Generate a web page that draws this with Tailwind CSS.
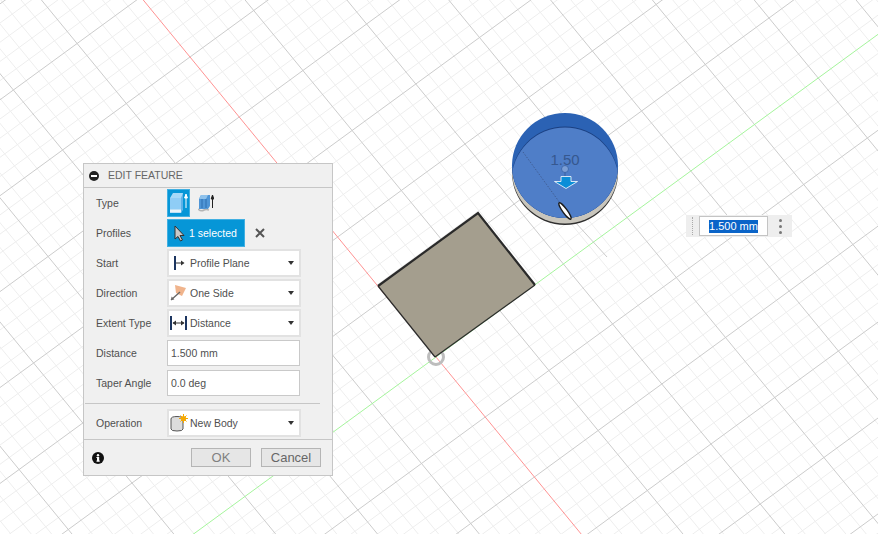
<!DOCTYPE html>
<html lang="en">
<head>
    <meta charset="UTF-8"/>
    <title>Edit Feature</title>
    <script src="https://cdn.jsdelivr.net/npm/@tailwindcss/browser@4"></script>
</head>
<body class="bg-white font-['Liberation_Sans',sans-serif]">
<div class="relative w-[878px] h-[534px] overflow-hidden bg-white">

    <!-- Viewport canvas -->
    <svg class="absolute inset-0" width="878" height="534" viewBox="0 0 878 534">
        <defs>
            <clipPath id="top-face"><ellipse cx="565" cy="165.5" rx="53" ry="52.5"/></clipPath>
        </defs>
        <g id="grid"></g>

        <!-- origin ring -->
        <circle cx="436" cy="357" r="7.5" fill="none" stroke="#bdbdbd" stroke-width="3"/>

        <!-- sketch rectangle -->
        <polygon points="378,286 478,213 535,285 435,357" fill="#a49e8e"/>
        <path d="M435 357 L378 286" stroke="#2b2b2b" stroke-width="1.2" fill="none"/>
        <path d="M435 357 L535 285" stroke="#2b2b2b" stroke-width="1.2" fill="none"/>
        <path d="M378 286 L478 213 L535 285" stroke="#2a2a2a" stroke-width="2.2" fill="none"/>

        <!-- cylinder -->
        <line x1="565" y1="211" x2="607" y2="257" stroke="#b5b5b5" stroke-width="0.7"/>
        <ellipse cx="565" cy="172.5" rx="53" ry="52.5" fill="#2e2e2e"/>
        <ellipse cx="565" cy="171" rx="53" ry="52.5" fill="#c8c5bc"/>
        <ellipse cx="565" cy="165.5" rx="53" ry="52.5" fill="#2b62b4"/>
        <g clip-path="url(#top-face)">
            <ellipse cx="565" cy="180" rx="53.5" ry="53.5" fill="#1a3f80"/>
            <ellipse cx="565" cy="181" rx="53.5" ry="53.5" fill="#4f7ec8"/>
        </g>
        <line x1="523" y1="152" x2="560" y2="203" stroke="#3c5588" stroke-width="0.8" stroke-dasharray="1.5 1.5"/>
        <text x="565" y="165" text-anchor="middle" font-size="15" fill="#36588f" font-family="Liberation Sans, sans-serif">1.50</text>
        <circle cx="565" cy="169" r="3.5" fill="#7c9ed4" stroke="#3f6aae" stroke-width="1"/>
        <line x1="565" y1="172" x2="565" y2="177" stroke="#3f6aae" stroke-width="1.5"/>
        <path d="M561 176.5 H571 V181.5 H577.5 L566 188.5 L554.5 181.5 H561 Z" fill="#0a8ed8" stroke="#fff" stroke-width="0.8"/>
        <ellipse cx="565" cy="211" rx="2.2" ry="10" transform="rotate(-36 565 211)" fill="#fff" stroke="#1c1c1c" stroke-width="1.4"/>
    </svg>

    <!-- Edit feature dialog -->
    <div class="absolute left-[83px] top-[163px] w-[250px] h-[313px] flex flex-col bg-[#f0f0f0] border border-[#c6c6c6] text-[10.5px] text-[#4f4f4f]">
        <div class="flex items-center h-[24px] shrink-0 border-b border-[#c6c6c6] pl-[5px] gap-[9px]">
            <svg width="10" height="10" viewBox="0 0 10 10"><circle cx="5" cy="5" r="5" fill="#222"/><rect x="2" y="4" width="6" height="2" fill="#fff"/></svg>
            <span class="text-[#666]">EDIT FEATURE</span>
        </div>

        <div class="flex flex-col gap-[2px] pt-px">
            <div class="flex items-center h-[28px]">
                <span class="w-[83px] pl-3 pt-[2px]">Type</span>
                <div class="flex items-center gap-[8px]">
                    <div class="flex items-center justify-center w-[23px] h-[28px] bg-[#0696d7] border border-[#41b0e2]">
                        <svg width="19" height="22" viewBox="0 0 19 22">
                            <path d="M1 6 L4 1 H14 V17 L12 21 H1 Z" fill="#a6d9f8"/>
                            <path d="M1 6 H12 V21 H1 Z" fill="#8fcdf6"/>
                            <path d="M12 6 L14 1 V17 L12 21 Z" fill="#5fb2e8"/>
                            <rect x="1" y="17.5" width="11" height="3" fill="#eaf3f8"/>
                            <path d="M17 16 V4 M15.6 6 L17 2 L18.4 6 Z" stroke="#fff" stroke-width="1" fill="#fff"/>
                        </svg>
                    </div>
                    <svg width="16" height="18" viewBox="0 0 16 18">
                        <path d="M1 5 L3 1 H12 V12 L10 15 H1 Z" fill="#4f95d6"/>
                        <path d="M3 1 H10 L8 5 H1 Z" fill="#8fc2ec"/>
                        <path d="M8 5 V14 M4 5 V14" stroke="#2f6fb0" stroke-width="1"/>
                        <path d="M0 15 Q3 18 6 16 Q8 15 11 16" stroke="#b4b4b4" stroke-width="1.6" fill="none"/>
                        <path d="M14.5 14 V3 M13.2 5 L14.5 1 L15.8 5 Z" stroke="#222" stroke-width="1" fill="#222"/>
                    </svg>
                </div>
            </div>

            <div class="flex items-center h-[28px]">
                <span class="w-[83px] pl-3 pt-[2px]">Profiles</span>
                <div class="flex items-center w-[78px] h-[28px] bg-[#0696d7] border border-[#41b0e2] text-white pl-[6px] gap-[4px]">
                    <svg width="11" height="17" viewBox="0 0 11 17"><path d="M1 1 V14 L4 11.5 L6.5 16 L8.5 15 L6 10.5 H10 Z" fill="#c9c9c9" stroke="#333" stroke-width="1"/></svg>
                    <span class="pt-[2px]">1 selected</span>
                </div>
                <svg class="ml-[10px]" width="10" height="10" viewBox="0 0 10 10"><path d="M1 1 L9 9 M9 1 L1 9" stroke="#555" stroke-width="2"/></svg>
            </div>

            <div class="flex items-center h-[28px]">
                <span class="w-[83px] pl-3 pt-[2px]">Start</span>
                <div class="flex items-center w-[134px] h-[28px] bg-white border-2 border-[#e2e2e2] pr-[5px]">
                    <svg class="w-[21px] shrink-0" width="21" height="16" viewBox="0 0 21 16"><path d="M6 1 V15" stroke="#1c3560" stroke-width="2"/><path d="M7 8 H13" stroke="#333" stroke-width="1"/><path d="M12 5.5 L15.5 8 L12 10.5 Z" fill="#333"/></svg>
                    <span class="flex-1 pt-[2px]">Profile Plane</span>
                    <span class="w-0 h-0 border-x-[3px] border-x-transparent border-t-[4px] border-t-[#333]"></span>
                </div>
            </div>

            <div class="flex items-center h-[28px]">
                <span class="w-[83px] pl-3 pt-[2px]">Direction</span>
                <div class="flex items-center w-[134px] h-[28px] bg-white border-2 border-[#e2e2e2] pr-[5px]">
                    <svg class="w-[21px] shrink-0" width="21" height="18" viewBox="0 0 21 18"><path d="M6 1 L17 4 L13 12 L7 9 Z" fill="#f0b48c"/><path d="M2 16 L11 8" stroke="#666" stroke-width="1.4"/><path d="M2 16 L2.6 12.6 L5.4 15.4 Z" fill="#666"/></svg>
                    <span class="flex-1 pt-[2px]">One Side</span>
                    <span class="w-0 h-0 border-x-[3px] border-x-transparent border-t-[4px] border-t-[#333]"></span>
                </div>
            </div>

            <div class="flex items-center h-[28px]">
                <span class="w-[83px] pl-3 pt-[2px]">Extent Type</span>
                <div class="flex items-center w-[134px] h-[28px] bg-white border-2 border-[#e2e2e2] pr-[5px]">
                    <svg class="w-[21px] shrink-0" width="21" height="16" viewBox="0 0 21 16"><path d="M2 1 V15 M17 1 V15" stroke="#1c3560" stroke-width="2"/><path d="M4 8 H15" stroke="#333" stroke-width="1"/><path d="M7 5.5 L3.5 8 L7 10.5 Z M12 5.5 L15.5 8 L12 10.5 Z" fill="#333"/></svg>
                    <span class="flex-1 pt-[2px]">Distance</span>
                    <span class="w-0 h-0 border-x-[3px] border-x-transparent border-t-[4px] border-t-[#333]"></span>
                </div>
            </div>

            <div class="flex items-center h-[28px]">
                <span class="w-[83px] pl-3 pt-[2px]">Distance</span>
                <div class="flex items-center w-[133px] h-[26px] bg-white border border-[#c9c9c9] pl-[3px] pt-[2px]">1.500 mm</div>
            </div>

            <div class="flex items-center h-[28px]">
                <span class="w-[83px] pl-3 pt-[2px]">Taper Angle</span>
                <div class="flex items-center w-[133px] h-[26px] bg-white border border-[#c9c9c9] pl-[3px] pt-[2px]">0.0 deg</div>
            </div>
        </div>

        <div class="h-px w-[235px] ml-px mt-[6px] mb-[5px] bg-[#c6c6c6]"></div>

        <div class="flex items-center h-[28px]">
            <span class="w-[83px] pl-3 pt-[2px]">Operation</span>
            <div class="flex items-center w-[134px] h-[28px] bg-white border-2 border-[#e2e2e2] pr-[5px]">
                <svg class="w-[21px] shrink-0" width="21" height="18" viewBox="0 0 21 18">
                    <path d="M2 5 Q2 2.5 8 2.5 Q14 2.5 14 5 V15 Q14 17 8 17 Q2 17 2 15 Z" fill="#dcdcdc" stroke="#555" stroke-width="1"/>
                    <circle cx="14.5" cy="4.5" r="2.6" fill="#f5a800"/>
                    <path d="M14.5 0 V9 M10 4.5 H19 M11.5 1.5 L17.5 7.5 M17.5 1.5 L11.5 7.5" stroke="#f5a800" stroke-width="1"/>
                </svg>
                <span class="flex-1 pt-[2px]">New Body</span>
                <span class="w-0 h-0 border-x-[3px] border-x-transparent border-t-[4px] border-t-[#333]"></span>
            </div>
        </div>

        <div class="flex-1 flex items-center mt-[2px] border-t border-[#c6c6c6] pl-[8px] pr-[11px]">
            <svg width="12" height="12" viewBox="0 0 12 12"><circle cx="6" cy="6" r="6" fill="#111"/><rect x="5" y="5" width="2.2" height="4.4" fill="#fff"/><rect x="4.4" y="5" width="2" height="1" fill="#fff"/><rect x="4.4" y="8.6" width="3.4" height="1" fill="#fff"/><circle cx="6" cy="3.2" r="1.2" fill="#fff"/></svg>
            <div class="ml-auto flex gap-[10px]">
                <button class="w-[60px] h-[19px] bg-[#e6e6e6] border border-[#b5b5b5] text-[13px] leading-none text-[#808080]">OK</button>
                <button class="w-[60px] h-[19px] bg-[#e6e6e6] border border-[#b5b5b5] text-[13px] leading-none text-[#666]">Cancel</button>
            </div>
        </div>
    </div>

    <!-- Distance input on the canvas -->
    <div class="absolute left-[686px] top-[215px] w-[106px] h-[22px] flex items-center bg-[#eeeeee]">
        <div class="w-[13px] h-full flex justify-center items-center">
            <span class="w-[2px] h-[18px] border-l border-dotted border-[#aaa]"></span>
        </div>
        <div class="flex items-center justify-center w-[69px] h-[20px] bg-white border border-[#c4c4c4] text-[11px]">
            <span class="bg-[#0a64c8] text-white leading-[13px]">1.500 mm</span>
        </div>
        <div class="flex-1 flex flex-col items-center gap-[3px]">
            <span class="w-[3px] h-[3px] rounded-full bg-[#777]"></span>
            <span class="w-[3px] h-[3px] rounded-full bg-[#777]"></span>
            <span class="w-[3px] h-[3px] rounded-full bg-[#777]"></span>
        </div>
    </div>
</div>

<script>
    // grid is a flat lattice around the origin, 5 minor cells per major
    const grid = document.getElementById("grid");
    const ox = 436, oy = 357;
    const u = [63.7, -46.5], v = [49.2, 60];

    function addLine(x1, y1, x2, y2, color) {
        const l = document.createElementNS("http://www.w3.org/2000/svg", "line");
        l.setAttribute("x1", x1); l.setAttribute("y1", y1);
        l.setAttribute("x2", x2); l.setAttribute("y2", y2);
        l.setAttribute("stroke", color);
        l.setAttribute("stroke-width", 1);
        grid.appendChild(l);
    }

    function drawFamily(level) {
        for (let n = -75; n <= 75; n++) {
            const isMajor = n % 5 === 0;
            const isAxis = n === 0;
            if (level === 0 && isMajor) continue;
            if (level === 1 && (!isMajor || isAxis)) continue;
            if (level === 2 && !isAxis) continue;
            const t = n / 5;
            const minor = "#eeeeee", major = "#cccccc";
            // lines along v, red axis
            let px = ox + u[0] * t, py = oy + u[1] * t;
            addLine(px - v[0] * 20, py - v[1] * 20, px + v[0] * 20, py + v[1] * 20, isAxis ? "#ff9292" : (isMajor ? major : minor));
            // lines along u, green axis
            px = ox + v[0] * t; py = oy + v[1] * t;
            addLine(px - u[0] * 20, py - u[1] * 20, px + u[0] * 20, py + u[1] * 20, isAxis ? "#a5f59c" : (isMajor ? major : minor));
        }
    }
    drawFamily(0);
    drawFamily(1);
    drawFamily(2);
</script>
</body>
</html>
